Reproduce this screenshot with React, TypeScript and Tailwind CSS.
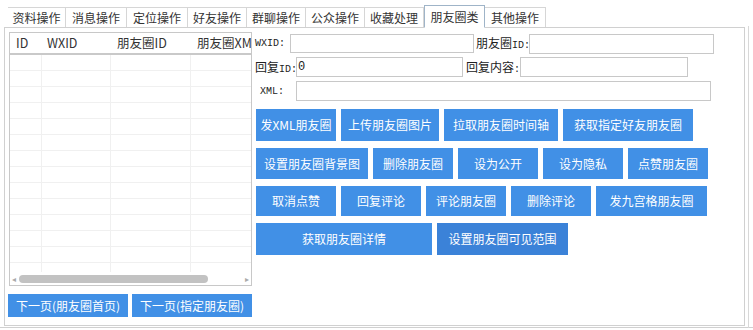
import React from "react";

const tabs = ["资料操作", "消息操作", "定位操作", "好友操作", "群聊操作", "公众操作", "收藏处理", "朋友圈类", "其他操作"];
const tabW = [58, 61, 61, 59, 59, 59, 59, 61, 61];

const cjk = { fontFamily: '"Noto Sans CJK SC", "Microsoft YaHei", sans-serif' };
const mono = { fontFamily: '"Liberation Mono", "Noto Sans CJK SC", monospace' };

function Btn({ w, children, dark }: { w: number; children: React.ReactNode; dark?: boolean }) {
  return (
    <div
      className={`flex items-center justify-center text-white text-[12px] whitespace-nowrap ${dark ? "bg-[#3b82d8]" : "bg-[#4190e6]"}`}
      style={{ width: w, ...cjk }}
    >
      {children}
    </div>
  );
}

export default function App() {
  const rows = Array.from({ length: 14 });
  return (
    <div className="relative w-[753px] h-[330px] bg-white overflow-hidden text-[#222]" style={cjk}>
      {/* tab bar */}
      <div className="flex pl-[8px] pt-[6px] h-[27px] items-end">
        {tabs.map((t, i) => {
          const active = i === 7;
          return (
            <div
              key={t}
              className={`flex items-center justify-center text-[12px] text-[#333] border bg-white ${
                active
                  ? "h-[23px] border-[#9fb4c8] border-b-white relative z-10 -mb-[1px]"
                  : "h-[20px] border-[#d6d6d6] border-b-0 border-l-0"
              } ${i === 0 ? "border-l" : ""}`}
              style={{ width: tabW[i] }}
            >
              {t}
            </div>
          );
        })}
      </div>
      {/* panel */}
      <div className="ml-[4px] w-[741px] h-[299px] border border-[#d0d0d0] flex pl-[4px] pt-[4px]">
        {/* left column */}
        <div className="flex flex-col w-[243px]">
          <div className="h-[254px] w-[243px] border border-[#c8c8c8] flex flex-col overflow-hidden">
            <div className="flex h-[22px] items-center text-[12.5px] text-[#333] border-b-2 border-[#c9c9c9] shrink-0 whitespace-nowrap overflow-hidden">
              <div className="w-[32px] pl-[6px] shrink-0">ID</div>
              <div className="w-[69px] pl-[5px] shrink-0">WXID</div>
              <div className="w-[80px] pl-[6px] shrink-0">朋友圈ID</div>
              <div className="w-[60px] pl-[6px] shrink-0 overflow-hidden">朋友圈XML</div>
            </div>
            <div className="flex-1 overflow-hidden">
              {rows.map((_, i) => (
                <div key={i} className="flex h-[16px] border-b border-[#f0f0f0]">
                  <div className="w-[32px] border-r border-[#f0f0f0] shrink-0" />
                  <div className="w-[69px] border-r border-[#f0f0f0] shrink-0" />
                  <div className="w-[80px] border-r border-[#f0f0f0] shrink-0" />
                  <div className="flex-1" />
                </div>
              ))}
            </div>
            <div className="h-[13px] shrink-0 flex items-center px-[2px] gap-[3px] relative">
              <span className="text-[8px] text-[#aaa] leading-none">◂</span>
              <div className="w-[189px] h-[8px] rounded-full bg-[#c2c2c2]" />
              <div className="flex-1" />
              <span className="text-[8px] text-[#aaa] leading-none">▸</span>
            </div>
          </div>
          <div className="flex gap-[4px] mt-[8px] h-[23px] -ml-[1px]">
            <Btn w={120}>下一页(朋友圈首页)</Btn>
            <Btn w={120}>下一页(指定朋友圈)</Btn>
          </div>
        </div>
        {/* right column */}
        <div className="flex flex-col pl-[3px] pt-[2px]">
          <div className="flex items-center h-[19px]">
            <span className="w-[35px] text-[10px] whitespace-nowrap" style={mono}>WXID:</span>
            <div className="w-[184px] h-[19px] border border-[#c8c8c8]" />
            <span className="ml-[2px] w-[53px] text-[12px] whitespace-nowrap" style={cjk}>
              朋友圈<span className="text-[10px]" style={mono}>ID:</span>
            </span>
            <div className="w-[185px] h-[20px] border border-[#c8c8c8]" />
          </div>
          <div className="flex items-center h-[20px] mt-[4px]">
            <span className="w-[41px] text-[12px] whitespace-nowrap">
              回复<span className="text-[10px]" style={mono}>ID:</span>
            </span>
            <div className="w-[167px] h-[20px] border border-[#c8c8c8] text-[12px] flex items-center pl-[1px]" style={mono}>0</div>
            <span className="ml-[3px] w-[54px] text-[12px] whitespace-nowrap">
              回复内容<span className="text-[10px]" style={mono}>:</span>
            </span>
            <div className="w-[168px] h-[20px] border border-[#c8c8c8]" />
          </div>
          <div className="flex items-center h-[20px] mt-[4px]">
            <span className="w-[41px] pl-[5px] text-[10px]" style={mono}>XML:</span>
            <div className="w-[415px] h-[20px] border border-[#c8c8c8]" />
          </div>
          <div className="flex flex-col gap-[7px] mt-[8px] pl-[1px]">
            <div className="flex gap-[5px] h-[32px]">
              <Btn w={80}>发XML朋友圈</Btn>
              <Btn w={98}>上传朋友圈图片</Btn>
              <Btn w={114}>拉取朋友圈时间轴</Btn>
              <Btn w={130}>获取指定好友朋友圈</Btn>
            </div>
            <div className="flex gap-[5px] h-[31px]">
              <Btn w={112}>设置朋友圈背景图</Btn>
              <Btn w={80}>删除朋友圈</Btn>
              <Btn w={80}>设为公开</Btn>
              <Btn w={80}>设为隐私</Btn>
              <Btn w={80}>点赞朋友圈</Btn>
            </div>
            <div className="flex gap-[5px] h-[30px]">
              <Btn w={80}>取消点赞</Btn>
              <Btn w={80}>回复评论</Btn>
              <Btn w={80}>评论朋友圈</Btn>
              <Btn w={80}>删除评论</Btn>
              <Btn w={111}>发九宫格朋友圈</Btn>
            </div>
            <div className="flex gap-[5px] h-[32px]">
              <Btn w={176}>获取朋友圈详情</Btn>
              <Btn w={131} dark>设置朋友圈可见范围</Btn>
            </div>
          </div>
        </div>
      </div>
      <div className="absolute left-0 top-[327px] w-[753px] h-[1px] bg-[#d0d0d0]" />
      <div className="absolute left-[748px] top-[26px] w-[1px] h-[302px] bg-[#d8d8d8]" />
    </div>
  );
}
